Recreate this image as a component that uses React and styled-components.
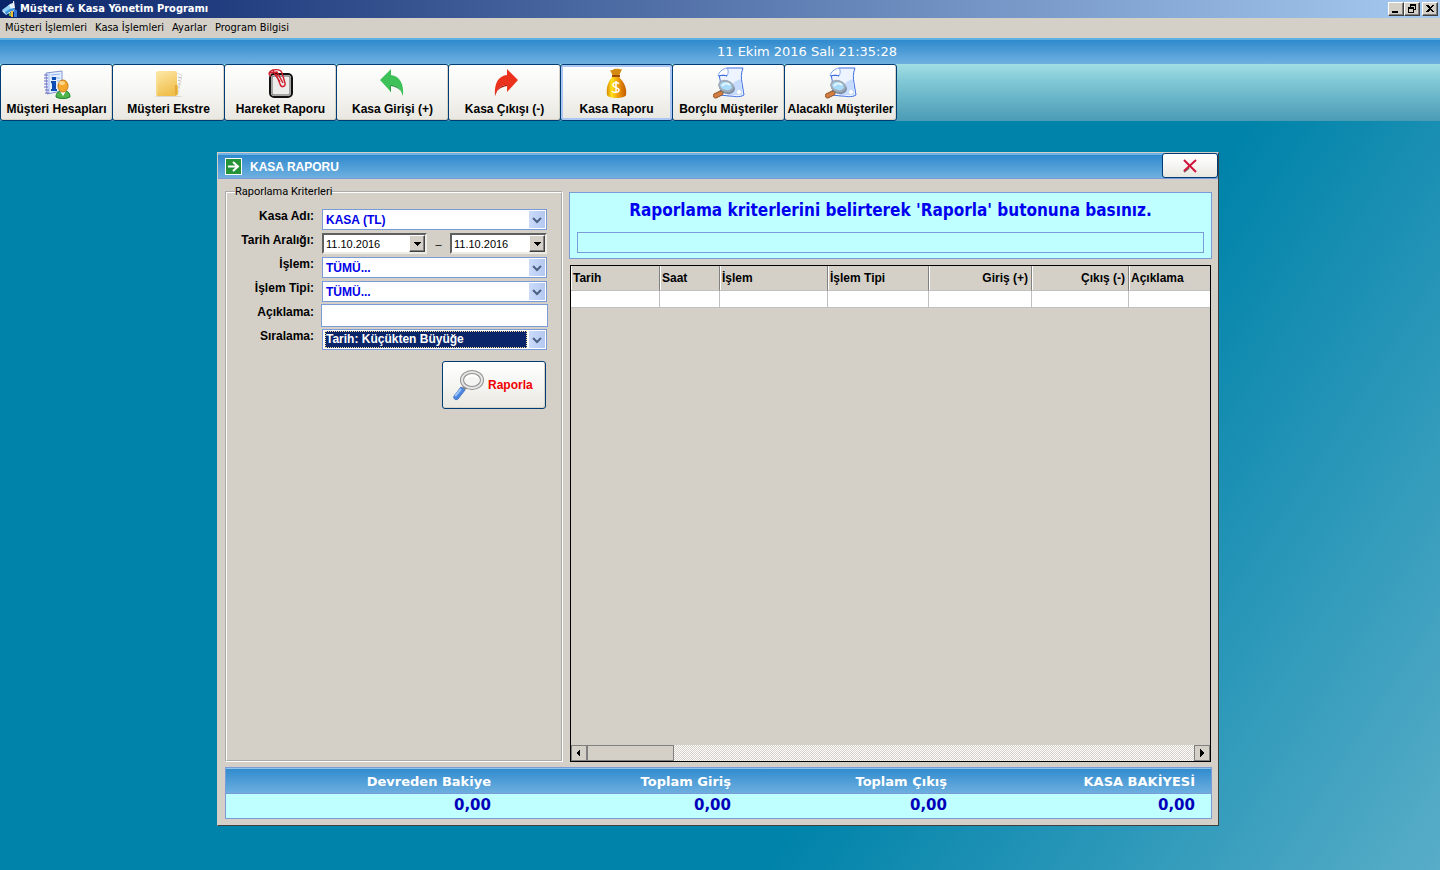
import React from "react";
import styled, { createGlobalStyle, css } from "styled-components";

const ui = '"Liberation Sans", Arial, sans-serif';
const tahoma = '"DejaVu Sans Condensed", "DejaVu Sans", sans-serif';
const verdana = '"DejaVu Sans", Verdana, sans-serif';
const face = "#d4d0c8";
const edge = "#7b9ad8";
const blueBar = "linear-gradient(#2f8acd, #6fb0e0)";

const Global = createGlobalStyle`
  * { box-sizing: border-box; }
  body { margin: 0; font: 11px/14px ${ui}; color: #000; background: #0083aa; }
  button, input, select { font: inherit; color: inherit; margin: 0; border-radius: 0; }
`;

const Screen = styled.div`
  min-height: 100vh;
  display: flex;
  flex-direction: column;
`;

const AppTitle = styled.header`
  height: 18px;
  display: flex;
  align-items: center;
  gap: 2px;
  padding: 0 2px;
  background: linear-gradient(90deg, #0a246a, #a6caf0);
`;

const AppName = styled.h1`
  flex: 1;
  margin: 0;
  color: #fff;
  font: bold 11px/18px ${tahoma};
`;

const CaptionButtons = styled.div`
  display: flex;
  & > :last-child { margin-left: 2px; }
`;

const CaptionButton = styled.button`
  width: 16px;
  height: 14px;
  padding: 0;
  display: grid;
  place-items: center;
  background: ${face};
  border: 1px solid;
  border-color: #fff #404040 #404040 #fff;
  box-shadow: inset -1px -1px #808080;
`;

const Menu = styled.nav`
  height: 20px;
  display: flex;
  align-items: center;
  gap: 8px;
  padding: 0 5px;
  background: ${face};
`;

const MenuLink = styled.a`
  color: #000;
  text-decoration: none;
  font: 11px/16px ${tahoma};
`;

const ClockBar = styled.div`
  height: 26px;
  border-top: 2px solid #5fb0e2;
  background: ${blueBar};
`;

const Clock = styled.time`
  display: block;
  max-width: 897px;
  text-align: right;
  color: #fff;
  font: 13px/24px ${verdana};
`;

const Toolbar = styled.div`
  display: flex;
  height: 57px;
  background: linear-gradient(#a2dfe4, #80c8d6 30%, #4a9bb4);
`;

const raised = css`
  color: #000;
  background: linear-gradient(#fff, #f5f5f2 50%, #e8e7e0);
  border: 1px solid #003c74;
  border-radius: 3px;
`;

const ToolButton = styled.button`
  ${raised}
  flex: 0 1 113px;
  min-width: 0;
  margin-right: -1px;
  padding: 2px 0 4px;
  display: flex;
  flex-direction: column;
  align-items: center;
  justify-content: space-between;
  white-space: nowrap;
  font: bold 12px/14px ${ui};
  box-shadow: ${(p) => (p.$active ? "inset 0 0 0 2px #a9c6f5" : "inset -1px -1px #d6d2c6")};
  & svg { width: 32px; height: 32px; }
`;

const Desktop = styled.main`
  flex: 1;
  display: flex;
  justify-content: center;
  align-items: flex-start;
  padding: 31px 20px 44px 16px;
  background: linear-gradient(123deg, #0083aa 65%, #58adc8 100%);
`;

const Window = styled.section`
  width: 100%;
  max-width: 1002px;
  background: ${face};
  border: 1px solid;
  border-color: ${face} #404040 #404040 ${face};
`;

const WindowTitle = styled.div`
  height: 26px;
  display: flex;
  align-items: center;
  gap: 8px;
  padding-left: 7px;
  color: #fff;
  background: ${blueBar};
  border-top: 2px solid #6fb3e6;
  border-bottom: 1px solid ${edge};
  & h2 { flex: 1; margin: 0; font: bold 12px/16px ${ui}; }
`;

const CloseButton = styled.button`
  ${raised}
  align-self: flex-start;
  width: 56px;
  height: 25px;
  margin-top: -2px;
  padding: 0;
  display: grid;
  place-items: center;
`;

const Body = styled.div`
  padding: 7px 6px 6px 7px;
  display: grid;
  gap: 5px;
`;

const Columns = styled.div`
  display: grid;
  grid-template-columns: 338px minmax(0, 1fr);
  gap: 6px;
  min-height: 576px;
`;

const Criteria = styled.fieldset`
  min-width: 0;
  margin: 0;
  padding: 11px 14px 0 8px;
  border: 2px groove #fff;
  & legend { padding: 0; font: 11px/12px Roboto, ${ui}; }
`;

const Form = styled.form`
  display: grid;
  gap: 3px;
`;

const Row = styled.div`
  display: grid;
  grid-template-columns: 79px 225px;
  column-gap: 8px;
  height: 21px;
  & > label { text-align: right; font: bold 12px/14px ${ui}; }
`;

const Combo = styled.div`
  display: grid;
  grid-template-columns: 1fr 16px;
  grid-template-rows: 17px;
  gap: 1px;
  padding: 1px;
  background: #fff;
  border: 1px solid ${edge};
`;

const ComboSelect = styled.select`
  appearance: none;
  min-width: 0;
  padding: 1px 2px 0;
  border: 0;
  outline: 0;
  background: #fff;
  color: #0000e8;
  font: bold 12px/15px ${ui};
  ${(p) =>
    p.$focused &&
    css`
      margin: 0 1px;
      padding: 0;
      color: #fff;
      background: #0a246a;
      border: 1px dotted #f5db95;
    `}
`;

const Arrow = styled.svg`
  width: 16px;
  height: 17px;
  background: linear-gradient(90deg, #cbdbfa, #b4c8f0);
`;

const Dates = styled.div`
  display: flex;
  justify-content: space-between;
  & > span { align-self: center; }
`;

const DateBox = styled.div`
  display: flex;
  width: ${(p) => p.$width};
  height: 21px;
  background: #fff;
  border: 2px solid;
  border-color: #606060 #eeece6 #eeece6 #606060;
  & input {
    flex: 1;
    min-width: 0;
    padding: 0 2px;
    border: 0;
    background: #fff;
    font: 11px/16px ${ui};
  }
  & button {
    width: 16px;
    padding: 0;
    display: grid;
    place-items: center;
    background: ${face};
    border: 1px solid;
    border-color: #fff #404040 #404040 #fff;
    box-shadow: inset -1px -1px #808080;
  }
`;

const TextBox = styled.input`
  margin: -1px;
  border: 1px solid ${edge};
  background: #fff;
`;

const ReportButton = styled.button`
  ${raised}
  justify-self: end;
  width: 104px;
  height: 48px;
  margin: 8px 1px 0 0;
  padding: 0 0 0 10px;
  display: flex;
  align-items: center;
  gap: 3px;
  color: #f00000;
  font: bold 12px/14px ${ui};
  box-shadow: inset -1px -1px #d6d2c6;
`;

const Results = styled.div`
  min-width: 0;
  padding-top: 6px;
  display: flex;
  flex-direction: column;
  gap: 6px;
`;

const Notice = styled.div`
  height: 67px;
  padding: 7px;
  display: flex;
  flex-direction: column;
  justify-content: space-between;
  text-align: center;
  background: #c0ffff;
  border: 1px solid ${edge};
  & p { margin: 0; color: #0000f0; font: bold 17px/20px ${tahoma}; }
`;

const ProgressTrack = styled.div`
  height: 21px;
  margin-bottom: -2px;
  border: 1px solid ${edge};
`;

const GridFrame = styled.div`
  flex: 1;
  margin: 0 1px;
  display: flex;
  flex-direction: column;
  justify-content: space-between;
  border: 1px solid #000;
`;

const DataTable = styled.table`
  width: 100%;
  table-layout: fixed;
  border-collapse: separate;
  border-spacing: 0;
  & th {
    height: 25px;
    padding: 0 3px 0 2px;
    text-align: left;
    white-space: nowrap;
    font: bold 12px/14px ${ui};
    border-right: 1px solid #808080;
    border-bottom: 1px solid #c0c0c0;
    box-shadow: inset 1px 0 #fff;
  }
  & td {
    height: 17px;
    padding: 0;
    background: #fff;
    border-right: 1px solid #c0c0c0;
    border-bottom: 1px solid #c0c0c0;
  }
  & th.num { text-align: right; }
  & th:last-child, & td:last-child { border-right: 0; }
`;

const ScrollBar = styled.div`
  height: 16px;
  display: flex;
  background: repeating-conic-gradient(${face} 0 25%, #fff 0 50%) 0 0 / 2px 2px;
`;

const ScrollButton = styled.button`
  width: 16px;
  padding: 0;
  display: grid;
  place-items: center;
  background: ${face};
  border: 1px solid #808080;
  &:last-child { margin-left: auto; }
`;

const Thumb = styled.div`
  width: 87px;
  background: ${face};
  border: 1px solid #808080;
`;

const Totals = styled.table`
  width: 100%;
  table-layout: fixed;
  border-spacing: 0;
  border: 1px solid ${edge};
  background: #c0ffff;
  font-family: ${verdana};
  & thead { background: ${blueBar}; box-shadow: inset 0 1px #8cc4ea; }
  & th, & td { padding: 0 16px 0 0; text-align: right; font-weight: bold; }
  & th { height: 26px; padding-top: 2px; color: #fff; font-size: 13px; border-bottom: 1px solid ${edge}; }
  & td { height: 24px; padding-bottom: 3px; color: #0000b8; font-size: 15px; line-height: 18px; }
`;

/* ---- drawings ---- */

const AppIcon = () => (
  <svg width="16" height="16" viewBox="0 0 16 16" aria-hidden="true">
    <path d="M8 3l3-1 1 5 2 3-5 1-5 3-4-4z" fill="#e3f3ff" />
    <path d="M0 9l7-5 2 4-5 4z" fill="#8fd0f6" />
    <path d="M3 11l5-3 4-1 1 2-6 2-3 3z" fill="#3c93dc" />
    <path d="M11 0h1l1 7h-2z" fill="#f5f5f5" />
    <path d="M9 10h2v6H9z" fill="#f1bd35" />
    <path d="M12 9h3v7h-3z" fill="#3679d8" />
    <path d="M7 12h2v3H7z" fill="#76b844" />
  </svg>
);

const AccountsIcon = () => (
  <svg viewBox="0 0 32 32" aria-hidden="true">
    <path d="M5 6l16-2v20L6 27z" fill="#e4efff" stroke="#8496d0" />
    <path d="M8 6v20" stroke="#a7bbf0" />
    <path d="M3 8h4M3 11h4M3 14h4M3 17h4M3 20h4M4 23h4M4 26h4" stroke="#6a69c4" />
    <path d="M10 8l9-1M10 11h9M16 14h4M10 17h2M10 23h2" stroke="#8fb4f2" />
    <path d="M11 10h4v3h-4zM10 14h5v8h1v2h-6v-2h1v-6h-1z" fill="#0d4bb5" />
    <path d="M15 30c0-4 2-5 4-6h6c3 1 4 3 4 6-3 2-11 2-14 0z" fill="#4fb64f" stroke="#1e8028" />
    <path d="M19 24l3 5 3-5z" fill="#fff" />
    <ellipse cx="22" cy="19" rx="5" ry="6" fill="#f5a62b" stroke="#c97a14" />
    <ellipse cx="21" cy="16" rx="3" ry="2" fill="#ffd68a" />
  </svg>
);

const FolderIcon = () => (
  <svg viewBox="0 0 32 32" aria-hidden="true">
    <defs>
      <linearGradient id="manila" x2=".4" y2="1">
        <stop offset="0" stopColor="#fde9a8" />
        <stop offset="1" stopColor="#f0c04e" />
      </linearGradient>
    </defs>
    <path d="M1 29h29l-3 1H4z" fill="#d9d9d6" />
    <path d="M23 6l6 2-4 19h-4z" fill="#fafafa" stroke="#dcdcdc" />
    <path d="M25 10l3 1M25 13l2 1M25 17h2M25 20h1" stroke="#b5b5b5" />
    <path d="M3 5l2-1h17c2 0 2 1 2 3v10l1 2v8l-2 2H4l-1-2z" fill="url(#manila)" />
    <path d="M22 18h2v10h-2z" fill="#e2ab3c" />
    <path d="M4 5v22" stroke="#f9e2a0" />
  </svg>
);

const ClipIcon = () => (
  <svg viewBox="0 0 32 32" aria-hidden="true">
    <rect x="5" y="7" width="22" height="23" rx="4" fill="#ececea" stroke="#111" strokeWidth="2" />
    <rect x="7" y="9" width="18" height="19" rx="2" fill="none" stroke="#8d8d8d" strokeWidth="1.500" />
    <path d="M6 9c-4-2-1-5 2-6 4-1 8 0 9 3l3 10c1 4-4 5-5 1L11 7M4 6l8-1 6 11M8 4l7 11" fill="none" stroke="#d11a2a" strokeWidth="1.400" />
  </svg>
);

const curve = "M3 13L14 2v6c9 1 13 9 12 21-3-9-7-11-12-11v7z";

const IncomeIcon = () => (
  <svg viewBox="0 0 32 32" aria-hidden="true">
    <path d={curve} fill="#3fc15a" />
    <path d="M14 18c5 0 9 2 12 11-1-6-6-9-12-10z" fill="#239a3d" />
    <path d="M14 19v6l-1-1v-6z" fill="#239a3d" />
  </svg>
);

const ExpenseIcon = () => (
  <svg viewBox="0 0 32 32" aria-hidden="true">
    <g transform="translate(32 0) scale(-1 1)">
      <path d={curve} fill="#ea321c" />
      <path d="M14 18c5 0 9 2 12 11-1-6-6-9-12-10z" fill="#b51c10" />
    </g>
  </svg>
);

const BagIcon = () => (
  <svg viewBox="0 0 32 32" aria-hidden="true">
    <defs>
      <linearGradient id="gold">
        <stop offset="0" stopColor="#d98a00" />
        <stop offset=".25" stopColor="#ffe21c" />
        <stop offset=".6" stopColor="#ef9a08" />
        <stop offset="1" stopColor="#c05a00" />
      </linearGradient>
    </defs>
    <path d="M9 3c3 1 4-2 6-1 3-1 4 1 6 0l-3 7h-6z" fill="#d58a12" />
    <path d="M11 10h7c5 5 8 11 7 18-1 4-18 4-19 0-1-7 1-13 5-18z" fill="url(#gold)" />
    <path d="M11 9h8" stroke="#a04a08" strokeWidth="2" />
    <path d="M18 17c-1-2-6-2-6 1s6 2 6 5-6 3-7 1M15 14v12" fill="none" stroke="#fff" strokeWidth="1.500" />
  </svg>
);

const SearchDocIcon = () => (
  <svg viewBox="0 0 32 32" aria-hidden="true">
    <path d="M14 1h16c-2 5-2 10-1 15l2 12c-5 3-10 1-15 1l-9-1c1-7 1-13-1-20z" fill="#eef4ff" stroke="#3f6fe4" />
    <path d="M28 12c-8 2-12 8-13 16h14c1-5-1-10-1-16z" fill="#c6dbfd" />
    <path d="M14 1c2 3 1 6 0 8-3-1-5-1-9 0 1-4 4-7 9-8z" fill="#fff" stroke="#7a9ff0" />
    <path d="M6 9c4-1 6-1 8 0" fill="none" stroke="#2d5fdc" />
    <circle cx="26" cy="25" r="2" fill="#fff" />
    <ellipse cx="14" cy="21" rx="8" ry="6" transform="rotate(15 14 21)" fill="#7d8ea3" />
    <ellipse cx="13" cy="19" rx="7" ry="5" transform="rotate(15 13 19)" fill="#a9dcfb" stroke="#9fabb8" strokeWidth="2" />
    <path d="M9 19c2-3 6-3 8-1" stroke="#e4f6ff" strokeWidth="2" fill="none" />
    <path d="M1 27l6-3c3 0 4 3 2 4l-6 3c-3 0-4-3-2-4z" fill="#cf7f45" stroke="#91501f" />
  </svg>
);

const MagnifierIcon = () => (
  <svg width="32" height="32" viewBox="0 0 32 32" aria-hidden="true">
    <path d="M9 18l3 3 3-2-3-3z" fill="#8a8a8a" />
    <ellipse cx="19" cy="11" rx="10" ry="8" fill="#f4f4f2" stroke="#8f8f8f" strokeWidth="4" />
    <ellipse cx="19" cy="11" rx="10" ry="8" fill="none" stroke="#e6e6e6" strokeWidth="2" />
    <path d="M13 10c2-4 9-5 12-1" fill="none" stroke="#fff" strokeWidth="2" />
    <path d="M8 18l4 3-7 9c-3 2-5-1-4-3z" fill="#4a86e0" stroke="#4a78c4" />
    <path d="M8 20l-6 7" stroke="#9cc4fa" strokeWidth="2" />
  </svg>
);

const GoIcon = () => (
  <svg width="17" height="17" viewBox="0 0 17 17" aria-hidden="true">
    <rect width="17" height="17" fill="#fff" />
    <rect x="1" y="1" width="15" height="15" fill="#259337" />
    <path d="M3 8.500h9M8 4l5 4.500-5 4.500" fill="none" stroke="#fff" strokeWidth="2" />
  </svg>
);

const CrossIcon = () => (
  <svg width="14" height="14" viewBox="0 0 14 14" aria-hidden="true">
    <path d="M1 13l5-4" stroke="#777" strokeWidth="2" />
    <path d="M1 1l12 12M13 1L1 12" stroke="#d2143a" strokeWidth="2" />
  </svg>
);

const Glyph = ({ d }) => (
  <svg width="10" height="10" viewBox="0 0 10 10" aria-hidden="true" shapeRendering="crispEdges">
    <path d={d} fillRule="evenodd" />
  </svg>
);

const Chevron = () => (
  <Arrow viewBox="0 0 16 17" aria-hidden="true">
    <path d="M4 7l4 4 4-4" fill="none" stroke="#4d6185" strokeWidth="2" />
  </Arrow>
);

/* ---- content ---- */

const tools = [
  ["Müşteri Hesapları", AccountsIcon],
  ["Müşteri Ekstre", FolderIcon],
  ["Hareket Raporu", ClipIcon],
  ["Kasa Girişi (+)", IncomeIcon],
  ["Kasa Çıkışı (-)", ExpenseIcon],
  ["Kasa Raporu", BagIcon],
  ["Borçlu Müşteriler", SearchDocIcon],
  ["Alacaklı Müşteriler", SearchDocIcon],
];

const gridColumns = [
  ["Tarih", 89],
  ["Saat", 60],
  ["İşlem", 108],
  ["İşlem Tipi", 101],
  ["Giriş (+)", 103, "num"],
  ["Çıkış (-)", 97, "num"],
  ["Açıklama"],
];

const totals = [
  ["Devreden Bakiye", "0,00", 281],
  ["Toplam Giriş", "0,00", 240],
  ["Toplam Çıkış", "0,00", 216],
  ["KASA BAKİYESİ", "0,00"],
];

const ComboRow = ({ id, label, value, focused }) => (
  <Row>
    <label htmlFor={id}>{label}</label>
    <Combo>
      <ComboSelect id={id} $focused={focused}>
        <option>{value}</option>
      </ComboSelect>
      <Chevron />
    </Combo>
  </Row>
);

const DateField = ({ id, label, width }) => (
  <DateBox $width={width}>
    <input id={id} aria-label={label} defaultValue="11.10.2016" />
    <button type="button" aria-label="Takvim">
      <Glyph d="M1 3h8L5 7z" />
    </button>
  </DateBox>
);

export default function App() {
  return (
    <Screen>
      <Global />
      <AppTitle>
        <AppIcon />
        <AppName>Müşteri &amp; Kasa Yönetim Programı</AppName>
        <CaptionButtons>
          <CaptionButton aria-label="Simge durumuna küçült">
            <Glyph d="M1 7h6v2H1z" />
          </CaptionButton>
          <CaptionButton aria-label="Önceki boyut">
            <Glyph d="M3 0h6v6H7V5h1V2H4v1H3zM1 3h6v6H1zM2 5v3h4V5z" />
          </CaptionButton>
          <CaptionButton aria-label="Kapat">
            <Glyph d="M1 1h2l2 2 2-2h2L6 4.500 9 8H7L5 6 3 8H1l3-3.500z" />
          </CaptionButton>
        </CaptionButtons>
      </AppTitle>
      <Menu>
        {["Müşteri İşlemleri", "Kasa İşlemleri", "Ayarlar", "Program Bilgisi"].map((m) => (
          <MenuLink key={m} href="#">{m}</MenuLink>
        ))}
      </Menu>
      <ClockBar>
        <Clock>11 Ekim 2016 Salı 21:35:28</Clock>
      </ClockBar>
      <Toolbar>
        {tools.map(([name, Icon]) => (
          <ToolButton key={name} $active={name === "Kasa Raporu"}>
            <Icon />
            {name}
          </ToolButton>
        ))}
      </Toolbar>
      <Desktop>
        <Window>
          <WindowTitle>
            <GoIcon />
            <h2>KASA RAPORU</h2>
            <CloseButton aria-label="Kapat">
              <CrossIcon />
            </CloseButton>
          </WindowTitle>
          <Body>
            <Columns>
              <Criteria>
                <legend>Raporlama Kriterleri</legend>
                <Form>
                  <ComboRow id="kasa" label="Kasa Adı:" value="KASA (TL)" />
                  <Row>
                    <label htmlFor="ilk">Tarih Aralığı:</label>
                    <Dates>
                      <DateField id="ilk" label="Başlangıç tarihi" width="105px" />
                      <span>–</span>
                      <DateField id="son" label="Bitiş tarihi" width="97px" />
                    </Dates>
                  </Row>
                  <ComboRow id="islem" label="İşlem:" value="TÜMÜ..." />
                  <ComboRow id="tip" label="İşlem Tipi:" value="TÜMÜ..." />
                  <Row>
                    <label htmlFor="aciklama">Açıklama:</label>
                    <TextBox id="aciklama" />
                  </Row>
                  <ComboRow id="sira" label="Sıralama:" value="Tarih: Küçükten Büyüğe" focused />
                  <ReportButton type="button">
                    <MagnifierIcon />
                    Raporla
                  </ReportButton>
                </Form>
              </Criteria>
              <Results>
                <Notice>
                  <p>Raporlama kriterlerini belirterek 'Raporla' butonuna basınız.</p>
                  <ProgressTrack role="progressbar" aria-label="İlerleme" />
                </Notice>
                <GridFrame>
                  <DataTable>
                    <colgroup>
                      {gridColumns.map(([name, width]) => (
                        <col key={name} width={width} />
                      ))}
                    </colgroup>
                    <thead>
                      <tr>
                        {gridColumns.map(([name, , kind]) => (
                          <th key={name} className={kind}>{name}</th>
                        ))}
                      </tr>
                    </thead>
                    <tbody>
                      <tr>
                        {gridColumns.map(([name]) => (
                          <td key={name} />
                        ))}
                      </tr>
                    </tbody>
                  </DataTable>
                  <ScrollBar>
                    <ScrollButton aria-label="Sola kaydır">
                      <Glyph d="M6 1v8L2 5z" />
                    </ScrollButton>
                    <Thumb />
                    <ScrollButton aria-label="Sağa kaydır">
                      <Glyph d="M3 1v8l4-4z" />
                    </ScrollButton>
                  </ScrollBar>
                </GridFrame>
              </Results>
            </Columns>
            <Totals>
              <colgroup>
                {totals.map(([name, , width]) => (
                  <col key={name} width={width} />
                ))}
              </colgroup>
              <thead>
                <tr>
                  {totals.map(([name]) => (
                    <th key={name}>{name}</th>
                  ))}
                </tr>
              </thead>
              <tbody>
                <tr>
                  {totals.map(([name, value]) => (
                    <td key={name}>{value}</td>
                  ))}
                </tr>
              </tbody>
            </Totals>
          </Body>
        </Window>
      </Desktop>
    </Screen>
  );
}
